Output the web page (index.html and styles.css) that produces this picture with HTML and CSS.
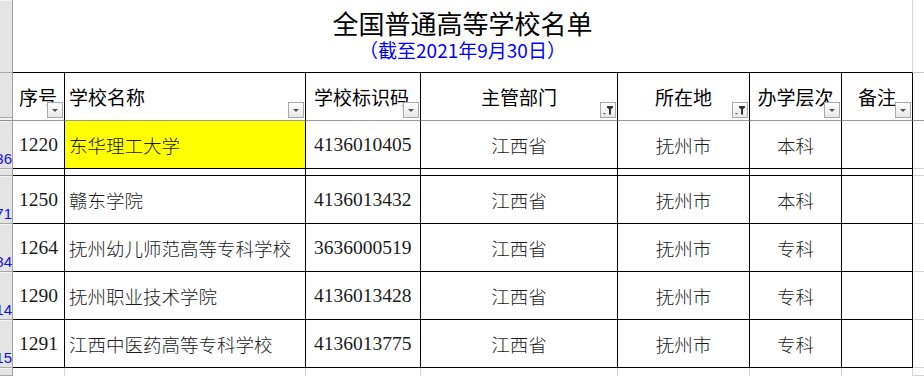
FILE: index.html
```html
<!DOCTYPE html>
<html lang="zh-CN">
<head>
<meta charset="utf-8">
<title>全国普通高等学校名单</title>
<link rel="stylesheet" href="styles.css">
</head>
<body>
<div class="sheet">
  <!-- title row -->
  <div class="rh rh-title"></div>
  <div class="title-cell">
    <div class="title">全国普通高等学校名单</div>
    <div class="subtitle">（截至2021年9月30日）</div>
  </div>
  <div class="fill fill-title"></div>

  <!-- header row -->
  <div class="rh rh-head"></div>
  <div class="hc left pad-a">序号<span class="fbtn"><svg width="14" height="14" viewBox="0 0 14 14"><path d="M4 6h6l-3 3z" fill="#555"/></svg></span></div>
  <div class="hc left pad-b">学校名称<span class="fbtn"><svg width="14" height="14" viewBox="0 0 14 14"><path d="M4 6h6l-3 3z" fill="#555"/></svg></span></div>
  <div class="hc left pad-c">学校标识码<span class="fbtn"><svg width="14" height="14" viewBox="0 0 14 14"><path d="M4 6h6l-3 3z" fill="#555"/></svg></span></div>
  <div class="hc center">主管部门<span class="fbtn"><svg width="14" height="14" viewBox="0 0 14 14"><path d="M2 10h3l-1.5 1.5z" fill="#555"/><path d="M6 3h6v1.5l-2 1.8v5.2h-2v-5.2l-2-1.8z" fill="#333"/></svg></span></div>
  <div class="hc center">所在地<span class="fbtn"><svg width="14" height="14" viewBox="0 0 14 14"><path d="M2 10h3l-1.5 1.5z" fill="#555"/><path d="M6 3h6v1.5l-2 1.8v5.2h-2v-5.2l-2-1.8z" fill="#333"/></svg></span></div>
  <div class="hc center">办学层次<span class="fbtn"><svg width="14" height="14" viewBox="0 0 14 14"><path d="M4 6h6l-3 3z" fill="#555"/></svg></span></div>
  <div class="hc center">备注<span class="fbtn"><svg width="14" height="14" viewBox="0 0 14 14"><path d="M4 6h6l-3 3z" fill="#555"/></svg></span></div>
  <div class="fill fill-head"></div>

  <!-- row 1220 -->
  <div class="rh rh-num"><span>1236</span></div>
  <div class="dc num pad-a">1220</div>
  <div class="dc cjk pad-b yellow">东华理工大学</div>
  <div class="dc num pad-c">4136010405</div>
  <div class="dc cjk center">江西省</div>
  <div class="dc cjk center">抚州市</div>
  <div class="dc cjk center">本科</div>
  <div class="dc"></div>
  <div class="fill"></div>

  <!-- hidden rows -->
  <div class="rh rh-hidden"><span class="caret">ˇ</span></div>
  <div class="dc"></div>
  <div class="dc"></div>
  <div class="dc"></div>
  <div class="dc"></div>
  <div class="dc"></div>
  <div class="dc"></div>
  <div class="dc"></div>
  <div class="fill"></div>

  <!-- row 1250 -->
  <div class="rh rh-num"><span>1271</span></div>
  <div class="dc num pad-a">1250</div>
  <div class="dc cjk pad-b">赣东学院</div>
  <div class="dc num pad-c">4136013432</div>
  <div class="dc cjk center">江西省</div>
  <div class="dc cjk center">抚州市</div>
  <div class="dc cjk center">本科</div>
  <div class="dc"></div>
  <div class="fill"></div>

  <!-- row 1264 -->
  <div class="rh rh-num"><span>1284</span></div>
  <div class="dc num pad-a">1264</div>
  <div class="dc cjk pad-b">抚州幼儿师范高等专科学校</div>
  <div class="dc num pad-c">3636000519</div>
  <div class="dc cjk center">江西省</div>
  <div class="dc cjk center">抚州市</div>
  <div class="dc cjk center">专科</div>
  <div class="dc"></div>
  <div class="fill"></div>

  <!-- row 1290 -->
  <div class="rh rh-num"><span>1314</span></div>
  <div class="dc num pad-a">1290</div>
  <div class="dc cjk pad-b">抚州职业技术学院</div>
  <div class="dc num pad-c">4136013428</div>
  <div class="dc cjk center">江西省</div>
  <div class="dc cjk center">抚州市</div>
  <div class="dc cjk center">专科</div>
  <div class="dc"></div>
  <div class="fill"></div>

  <!-- row 1291 -->
  <div class="rh rh-num"><span>1315</span></div>
  <div class="dc num pad-a">1291</div>
  <div class="dc cjk pad-b">江西中医药高等专科学校</div>
  <div class="dc num pad-c">4136013775</div>
  <div class="dc cjk center">江西省</div>
  <div class="dc cjk center">抚州市</div>
  <div class="dc cjk center">专科</div>
  <div class="dc"></div>
  <div class="fill"></div>

  <!-- partial next row -->
  <div class="rh rh-last"></div>
  <div class="ec"></div>
  <div class="ec"></div>
  <div class="ec"></div>
  <div class="ec"></div>
  <div class="ec"></div>
  <div class="ec"></div>
  <div class="ec"></div>
  <div class="fill"></div>
</div>
</body>
</html>
```

FILE: styles.css
```css
* { box-sizing: border-box; }
html, body { margin: 0; padding: 0; background: #fff; }
body { width: 924px; height: 376px; overflow: hidden; }

.sheet {
  display: grid;
  grid-template-columns: 13px 52px 241px 115px 197px 132px 92px 71px 11px;
  grid-template-rows: 73px 48px 48px 7px 48px 48px 48px 48px 8px;
  font-family: "Noto Sans CJK SC", "Noto Sans", sans-serif;
  color: #000;
}

/* row header column */
.rh {
  background: #e4e4e4;
  border-right: 1px solid #a0a0a0;
  border-bottom: 1px solid #a8a8a8;
  box-shadow: inset 0 1px 0 #f4f4f4;
  overflow: hidden;
  display: flex;
  justify-content: flex-end;
  align-items: flex-end;
}
.rh-head { border-bottom: 1px solid #8e8e8e; box-shadow: inset 0 -2px 0 #f4f4f4, inset 0 -3px 0 #a8a8a8; }
.rh-num span {
  font-family: "Liberation Sans", sans-serif;
  font-size: 15px;
  line-height: 15px;
  color: #1010e0;
  white-space: nowrap;
  margin-bottom: 2px;
}
.rh-hidden { justify-content: center; align-items: center; }
.caret { font-family: "DejaVu Sans", sans-serif; font-size: 9px; line-height: 7px; color: #1010e0; padding-left: 2px; }

/* title */
.title-cell {
  grid-column: 2 / 9;
  border-bottom: 1px solid #000;
  border-right: 1px solid #d4d4d4;
  display: flex;
  flex-direction: column;
  align-items: center;
  padding-top: 8px;
}
.title {
  font-size: 26px;
  line-height: 30px;
  font-weight: 400;
}
.subtitle {
  font-size: 19px;
  line-height: 24px;
  color: #0000ff;
}

/* fill column right of table */
.fill { border-bottom: 1px solid #d4d4d4; }
.fill-title { border-bottom: 1px solid #c8c8c8; }
.fill-head { border-bottom: 1px solid #9a9a9a; }

/* header cells */
.hc {
  position: relative;
  border-right: 1px solid #000;
  border-bottom: 1px solid #9a9a9a;
  font-size: 19px;
  display: flex;
  align-items: center;
  white-space: nowrap;
  padding-bottom: 1px;
}
.left { justify-content: flex-start; }
.center { justify-content: center; }
.pad-a { padding-left: 6px; }
.pad-b { padding-left: 4px; }
.pad-c { padding-left: 8px; }

.fbtn {
  position: absolute;
  right: 1px;
  bottom: 2px;
  width: 16px;
  height: 16px;
  border: 1px solid #a9a9a9;
  background: linear-gradient(#ffffff, #e8e8e8);
  display: flex;
  align-items: center;
  justify-content: center;
}
.fbtn svg { display: block; }

/* data cells */
.dc {
  border-right: 1px solid #000;
  border-bottom: 1px solid #000;
  display: flex;
  align-items: center;
  white-space: nowrap;
  overflow: hidden;
  font-size: 19px;
  color: #1a1a1a;
}
.num {
  font-family: "Liberation Serif", serif;
  font-size: 19.5px;
}
.cjk {
  font-family: "Noto Sans CJK SC", sans-serif;
  font-weight: 300;
  font-size: 18.5px;
}
.yellow { background: #ffff00; }

/* empty cells below table */
.ec { border-right: 1px solid #d4d4d4; }
```
